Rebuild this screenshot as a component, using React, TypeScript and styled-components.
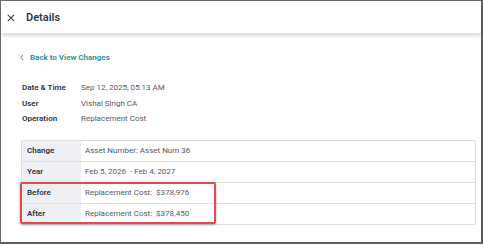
import React from "react";
import styled, { createGlobalStyle } from "styled-components";

const GlobalStyle = createGlobalStyle`
  html, body {
    margin: 0;
    padding: 0;
    background: #ffffff;
  }
  body {
    font-family: Roboto, "Liberation Sans", sans-serif;
  }
`;

const infoRows = [
  { label: "Date & Time", value: "Sep 12, 2025, 05:13 AM" },
  { label: "User", value: "Vishal Singh CA" },
  { label: "Operation", value: "Replacement Cost" },
];

const tableRows = [
  { label: "Change", value: "Asset Number: Asset Num 36" },
  { label: "Year", value: "Feb 5, 2026\u00a0\u00a0- Feb 4, 2027" },
];

const highlightRows = [
  { label: "Before", value: "Replacement Cost:\u00a0\u00a0$378,976" },
  { label: "After", value: "Replacement Cost:\u00a0\u00a0$378,450" },
];

const App: React.FC = () => {
  return (
    <>
      <GlobalStyle />
      <Frame>
        <Header>
          <CloseIcon viewBox="0 0 10 10">
            <path d="M1 1 L9 9 M9 1 L1 9" />
          </CloseIcon>
          <Title>Details</Title>
        </Header>
        <Body>
          <BackLink>
            <Chevron viewBox="0 0 6 10">
              <path d="M4.5 1 L1.5 5 L4.5 9" />
            </Chevron>
            Back to View Changes
          </BackLink>
          <InfoList>
            {infoRows.map((row) => (
              <InfoRow key={row.label}>
                <InfoLabel>{row.label}</InfoLabel>
                <InfoValue>{row.value}</InfoValue>
              </InfoRow>
            ))}
          </InfoList>
          <Table>
            {tableRows.map((row) => (
              <Row key={row.label}>
                <Cell $head>{row.label}</Cell>
                <Cell>{row.value}</Cell>
              </Row>
            ))}
            <Highlight>
              {highlightRows.map((row, i) => (
                <Row key={row.label} $last={i === highlightRows.length - 1}>
                  <Cell $head>{row.label}</Cell>
                  <Cell>{row.value}</Cell>
                </Row>
              ))}
              <RedBox />
            </Highlight>
          </Table>
        </Body>
      </Frame>
    </>
  );
};

export default App;

const Frame = styled.div`
  box-sizing: border-box;
  width: 483px;
  height: 244px;
  border-top: 1px solid #6a6a6a;
  border-left: 1px solid #6a6a6a;
  border-right: 2px solid #5e5e5e;
  border-bottom: 2px solid #5e5e5e;
  background: #ffffff;
  display: flex;
  flex-direction: column;
  overflow: hidden;
`;
const Header = styled.div`
  height: 32px;
  display: flex;
  align-items: center;
  padding-left: 6px;
  gap: 11px;
  box-shadow: 0 2px 3px rgba(0, 0, 0, 0.14);
  border-bottom: 1px solid #e2e2e2;
  flex-shrink: 0;
`;
const CloseIcon = styled.svg`
  width: 8px;
  height: 8px;
  fill: none;
  stroke: #333a44;
  stroke-width: 1.3;
  margin-top: 1px;
`;
const Title = styled.div`
  font-size: 11px;
  font-weight: 600;
  color: #2f3a48;
`;
const Body = styled.div`
  padding: 16px 9px 0 19px;
  display: flex;
  flex-direction: column;
`;
const BackLink = styled.div`
  display: flex;
  align-items: center;
  gap: 6px;
  font-size: 8px;
  font-weight: 600;
  color: #26908c;
  height: 14px;
`;
const Chevron = styled.svg`
  width: 4px;
  height: 7px;
  fill: none;
  stroke: #26908c;
  stroke-width: 1.4;
`;
const InfoList = styled.div`
  margin-top: 16px;
  display: flex;
  flex-direction: column;
`;
const InfoRow = styled.div`
  display: flex;
  height: 15.5px;
  align-items: center;
  font-size: 8px;
  padding-left: 2px;
`;
const InfoLabel = styled.div`
  width: 59px;
  font-weight: 600;
  color: #2c3543;
`;
const InfoValue = styled.div`
  color: #555b63;
`;
const Table = styled.div`
  margin-top: 13px;
  margin-left: 1px;
  width: 453px;
  border: 1px solid #dedede;
  border-radius: 2px;
  display: flex;
  flex-direction: column;
`;
const Row = styled.div<{ $last?: boolean }>`
  display: flex;
  height: 20px;
  border-bottom: ${({ $last }) => ($last ? "none" : "1px solid #e0e0e0")};
`;
const Cell = styled.div<{ $head?: boolean }>`
  display: flex;
  align-items: center;
  font-size: 8px;
  padding-left: ${({ $head }) => ($head ? "5px" : "4px")};
  width: ${({ $head }) => ($head ? "54px" : "auto")};
  flex: ${({ $head }) => ($head ? "none" : "1")};
  background: ${({ $head }) => ($head ? "#eef0f4" : "#ffffff")};
  font-weight: ${({ $head }) => ($head ? 600 : 400)};
  color: ${({ $head }) => ($head ? "#2c3543" : "#555b63")};
`;
const Highlight = styled.div`
  position: relative;
  display: flex;
  flex-direction: column;
`;
const RedBox = styled.div`
  position: absolute;
  left: -2px;
  top: -1px;
  width: 196px;
  height: 42px;
  box-sizing: border-box;
  border: 2px solid #e8474b;
  border-radius: 2px;
  box-shadow: 0 1px 3px rgba(0, 0, 0, 0.3);
  pointer-events: none;
`;
